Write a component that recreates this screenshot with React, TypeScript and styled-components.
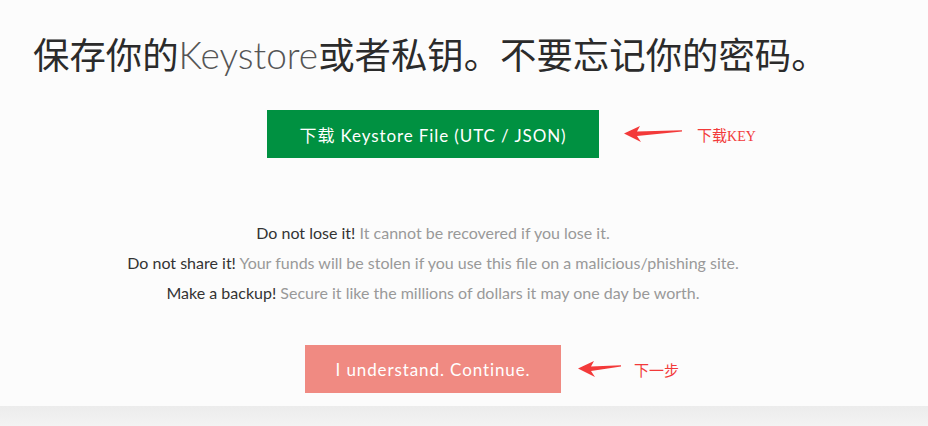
import React from 'react'
import styled, { createGlobalStyle } from 'styled-components'

const GlobalStyle = createGlobalStyle`
    html, body {
        margin: 0;
        padding: 0;
        background: #fcfcfc;
    }
    body {
        font-family: Lato, 'Noto Sans CJK SC', sans-serif;
        color: #333;
    }
`

const Page = styled.div`
    height: 426px;
    display: flex;
    flex-direction: column;
`

const Main = styled.main`
    width: 866px;
    box-sizing: border-box;
    padding: 31px 33px 0;
    display: flex;
    flex-direction: column;
    align-items: center;
    flex: 0 0 406px;
`

const Footer = styled.div`
    flex: 1;
    background: linear-gradient(#ececec, #f3f3f3);
`

const Heading = styled.h1`
    align-self: flex-start;
    margin: 0;
    font-family: Lato, 'Noto Sans CJK SC', sans-serif;
    font-size: 36.4px;
    line-height: 48px;
    font-weight: 400;
    color: #2b2b2b;
    white-space: nowrap;
`

const Light = styled.span`
    font-weight: 300;
    color: #555;
    font-size: 37px;
`

const ButtonRow = styled.div<{ $mt: number }>`
    position: relative;
    margin-top: ${({ $mt }) => $mt}px;
    display: flex;
    justify-content: center;
`

interface ButtonProps {
    $bg: string
    $w: number
}

const Button = styled.button<ButtonProps>`
    width: ${({ $w }) => $w}px;
    height: 48px;
    border: none;
    border-radius: 0;
    background: ${({ $bg }) => $bg};
    color: #fff;
    font-family: Lato, 'Noto Sans CJK SC', sans-serif;
    font-size: 17px;
    font-weight: 400;
    letter-spacing: 0.9px;
    cursor: pointer;
`

const Note = styled.div<{ $left: number; $gap: number }>`
    position: absolute;
    left: 100%;
    top: 0;
    height: 48px;
    margin-left: ${({ $left }) => $left}px;
    display: flex;
    align-items: center;
    gap: ${({ $gap }) => $gap}px;
    color: #f23a3a;
    font-family: 'Noto Sans CJK SC', sans-serif;
    font-size: 15px;
    white-space: nowrap;
`

const Serif = styled.span`
    font-family: 'Liberation Serif', serif;
    font-size: 14px;
`

const Warnings = styled.div`
    margin-top: 64px;
    display: flex;
    flex-direction: column;
    align-items: center;
    gap: 9px;
`

const Line = styled.p`
    margin: 0;
    font-size: 16px;
    line-height: 21px;
    color: #999;
    font-weight: 400;
`

const Strong = styled.strong`
    color: #333;
    font-weight: 400;
`

const Arrow = ({ len }: { len: number }) => (
    <svg width={len} height="18" viewBox={`0 0 ${len} 18`}>
        <path
            d={`M0 8.5 L16 1 L13 6.5 L${len} 5.2 L${len} 6.4 L13 11 L17 17 Z`}
            fill="#f33a3a"
        />
    </svg>
)

export default function App() {
    return (
        <Page>
            <GlobalStyle />
            <Main>
                <Heading>
                    保存你的<Light>Keystore</Light>或者私钥。不要忘记你的密码。
                </Heading>
                <ButtonRow $mt={31}>
                    <Button $bg="#009141" $w={332}>
                        下载 Keystore File (UTC / JSON)
                    </Button>
                    <Note $left={25} $gap={15}>
                        <Arrow len={58} />
                        <span>
                            下载<Serif>KEY</Serif>
                        </span>
                    </Note>
                </ButtonRow>
                <Warnings>
                    <Line>
                        <Strong>Do not lose it!</Strong> It cannot be recovered if you lose it.
                    </Line>
                    <Line>
                        <Strong>Do not share it!</Strong> Your funds will be stolen if you use
                        this file on a malicious/phishing site.
                    </Line>
                    <Line>
                        <Strong>Make a backup!</Strong> Secure it like the millions of dollars it
                        may one day be worth.
                    </Line>
                </Warnings>
                <ButtonRow $mt={42}>
                    <Button $bg="#f08a82" $w={256}>
                        I understand. Continue.
                    </Button>
                    <Note $left={17} $gap={13}>
                        <Arrow len={43} />
                        <span>下一步</span>
                    </Note>
                </ButtonRow>
            </Main>
            <Footer />
        </Page>
    )
}
